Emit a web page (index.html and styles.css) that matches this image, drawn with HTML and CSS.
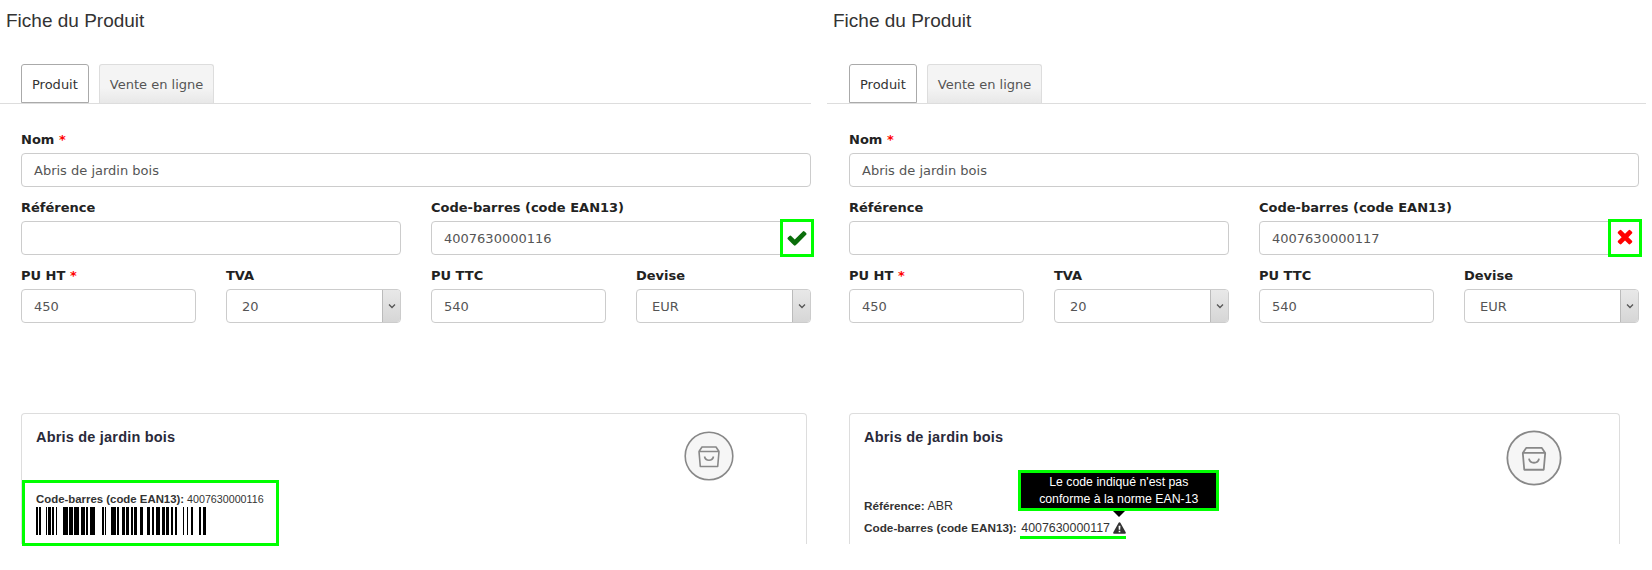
FILE: index.html
```html
<!DOCTYPE html>
<html lang="fr">
<head>
<meta charset="utf-8">
<title>Fiche du Produit</title>
<link rel="stylesheet" href="styles.css">
</head>
<body>
<div class="page">
  <section class="panel panel-left">
    <h1 class="title">Fiche du Produit</h1>
    <div class="tabs">
      <div class="tab tab-active">Produit</div>
      <div class="tab">Vente en ligne</div>
    </div>
    <div class="form">
      <div class="field">
        <div class="label">Nom <span class="req">*</span></div>
        <div class="input">Abris de jardin bois</div>
      </div>
      <div class="row">
        <div class="field">
          <div class="label">Référence</div>
          <div class="input"></div>
        </div>
        <div class="field">
          <div class="label">Code-barres (code EAN13)</div>
          <div class="input-wrap">
            <div class="input input-code">4007630000116</div>
            <div class="status">
              <svg class="ico-check" viewBox="0 0 1792 1792"><path d="M1671 566q0 40-28 68l-724 724-136 136q-28 28-68 28t-68-28l-136-136-362-362q-28-28-28-68t28-68l136-136q28-28 68-28t68 28l294 295 656-657q28-28 68-28t68 28l136 136q28 28 28 68z"/></svg>
            </div>
          </div>
        </div>
      </div>
      <div class="row">
        <div class="subrow">
          <div class="field">
            <div class="label">PU HT <span class="req">*</span></div>
            <div class="input">450</div>
          </div>
          <div class="field">
            <div class="label">TVA</div>
            <div class="select"><span class="select-val">20</span><span class="select-btn"><svg viewBox="0 0 10 10"><path d="M2 3.5 5 6.5 8 3.5" /></svg></span></div>
          </div>
        </div>
        <div class="subrow">
          <div class="field">
            <div class="label">PU TTC</div>
            <div class="input">540</div>
          </div>
          <div class="field">
            <div class="label">Devise</div>
            <div class="select"><span class="select-val">EUR</span><span class="select-btn"><svg viewBox="0 0 10 10"><path d="M2 3.5 5 6.5 8 3.5" /></svg></span></div>
          </div>
        </div>
      </div>
    </div>
    <div class="card card-left">
      <div class="card-head">
        <div class="card-title">Abris de jardin bois</div>
        <svg class="bag bag-left" viewBox="0 0 50 50"><circle cx="25" cy="25" r="23.8"/><path d="M15 20.5 16.3 35.5H33.7L35 20.5ZM15 20.5 18 16H32L35 20.5M20.5 25.5C21.5 30.5 28.5 30.5 29.5 25.5"/></svg>
      </div>
      <div class="barcode-box">
        <div class="code-line"><b>Code-barres (code EAN13):</b> 4007630000116</div>
        <svg class="barcode" viewBox="0 0 172 38" preserveAspectRatio="none"><path d="M0 0h2v38h-2zM3 0h2v38h-2zM10 0h1v38h-1zM12 0h3v38h-3zM16 0h2v38h-2zM20 0h1v38h-1zM27 0h5v38h-5zM33 0h4v38h-4zM38 0h5v38h-5zM45 0h4v38h-4zM50 0h2v38h-2zM54 0h5v38h-5zM66 0h2v38h-2zM69 0h1v38h-1zM75 0h5v38h-5zM81 0h2v38h-2zM86 0h3v38h-3zM90 0h3v38h-3zM95 0h2v38h-2zM98 0h3v38h-3zM104 0h3v38h-3zM111 0h3v38h-3zM116 0h2v38h-2zM120 0h4v38h-4zM126 0h3v38h-3zM130 0h3v38h-3zM135 0h2v38h-2zM139 0h2v38h-2zM147 0h1v38h-1zM151 0h1v38h-1zM155 0h2v38h-2zM163 0h2v38h-2zM167 0h3v38h-3z"/></svg>
      </div>
    </div>
  </section>

  <section class="panel panel-right">
    <h1 class="title">Fiche du Produit</h1>
    <div class="tabs">
      <div class="tab tab-active">Produit</div>
      <div class="tab">Vente en ligne</div>
    </div>
    <div class="form">
      <div class="field">
        <div class="label">Nom <span class="req">*</span></div>
        <div class="input">Abris de jardin bois</div>
      </div>
      <div class="row">
        <div class="field">
          <div class="label">Référence</div>
          <div class="input"></div>
        </div>
        <div class="field">
          <div class="label">Code-barres (code EAN13)</div>
          <div class="input-wrap">
            <div class="input input-code">4007630000117</div>
            <div class="status">
              <svg class="ico-times" viewBox="0 0 1408 1792"><path d="M1298 1188q0 40-28 68l-136 136q-28 28-68 28t-68-28l-294-294-294 294q-28 28-68 28t-68-28l-136-136q-28-28-28-68t28-68l294-294-294-294q-28-28-28-68t28-68l136-136q28-28 68-28t68 28l294 294 294-294q28-28 68-28t68 28l136 136q28 28 28 68t-28 68l-294 294 294 294q28 28 28 68z"/></svg>
            </div>
          </div>
        </div>
      </div>
      <div class="row">
        <div class="subrow">
          <div class="field">
            <div class="label">PU HT <span class="req">*</span></div>
            <div class="input">450</div>
          </div>
          <div class="field">
            <div class="label">TVA</div>
            <div class="select"><span class="select-val">20</span><span class="select-btn"><svg viewBox="0 0 10 10"><path d="M2 3.5 5 6.5 8 3.5" /></svg></span></div>
          </div>
        </div>
        <div class="subrow">
          <div class="field">
            <div class="label">PU TTC</div>
            <div class="input">540</div>
          </div>
          <div class="field">
            <div class="label">Devise</div>
            <div class="select"><span class="select-val">EUR</span><span class="select-btn"><svg viewBox="0 0 10 10"><path d="M2 3.5 5 6.5 8 3.5" /></svg></span></div>
          </div>
        </div>
      </div>
    </div>
    <div class="card card-right">
      <div class="card-head">
        <div class="card-title">Abris de jardin bois</div>
        <svg class="bag bag-right" viewBox="0 0 50 50"><circle cx="25" cy="25" r="23.8"/><path d="M15 20.5 16.3 35.5H33.7L35 20.5ZM15 20.5 18 16H32L35 20.5M20.5 25.5C21.5 30.5 28.5 30.5 29.5 25.5"/></svg>
      </div>
      <div class="meta">
        <div class="meta-line"><b>Référence:</b> ABR</div>
        <div class="meta-line"><b>Code-barres (code EAN13):</b> <span class="code-flag">4007630000117 <svg class="ico-warn" viewBox="0 0 14 13"><path fill-rule="evenodd" d="M7 0.3C7.5 0.3 7.9 0.6 8.1 1L13.7 11C14.1 11.8 13.6 12.7 12.7 12.7H1.3C.4 12.7-.1 11.8.3 11L5.9 1C6.1.6 6.5.3 7 .3ZM6 4 6.2 8.5H7.8L8 4ZM6.1 9.5V11.2H7.9V9.5Z"/></svg><span class="tooltip">Le code indiqué n'est pas conforme à la norme EAN-13</span></span></div>
      </div>
    </div>
  </section>
</div>
</body>
</html>
```
FILE: styles.css
```css
* { box-sizing: border-box; }
html, body { margin: 0; padding: 0; background: #fff; }
body { font-family: "DejaVu Sans", Verdana, sans-serif; color: #222; }
.page { display: flex; gap: 16px; width: 1652px; height: 570px; overflow: hidden; }
.panel { --inset: 21px; flex: none; display: flex; flex-direction: column; }
.panel-left { width: 811px; }
.panel-right { --inset: 22px; width: 819px; }
.title {
  margin: 0; padding: 10px 0 0 6px; height: 64px;
  font: 400 19px/22px "Liberation Sans", Arial, sans-serif; color: #333;
}
.tabs { display: flex; gap: 10px; height: 40px; padding-left: var(--inset); border-bottom: 1px solid #ddd; }
.tab {
  height: 39px; padding: 1px 10px 0; display: flex; align-items: center;
  font-size: 13px; color: #555;
  border: 1px solid #ddd; border-bottom-width: 0; border-radius: 3px 3px 0 0;
  background: linear-gradient(#f4f4f4 60%, #e8e8e8);
}
.tab-active { color: #333; background: #fff; border-color: #aaa; border-bottom-width: 1px; }
.form { padding-left: var(--inset); margin-top: 22px; display: flex; flex-direction: column; }
.field { display: flex; flex-direction: column; height: 68px; min-width: 0; }
.form > .field { width: 790px; }
.label { height: 27px; padding-top: 4px; font-size: 13px; font-weight: 700; line-height: 19px; color: #222; }
.req { color: #f00; }
.row { display: grid; grid-template-columns: 380px 380px; column-gap: 30px; }
.subrow { display: grid; grid-template-columns: 175px 175px; column-gap: 30px; }
.input {
  height: 34px; padding: 1px 12px 0; display: flex; align-items: center;
  font-size: 13px; color: #555; background: #fff;
  border: 1px solid #ccc; border-radius: 4px;
}
.input-wrap { position: relative; }
.input-code { padding-right: 40px; }
.status {
  position: absolute; top: -2px; right: -3px; width: 34px; height: 38px;
  display: flex; align-items: center; justify-content: center;
  background: #fff; border: 3px solid #0f0;
}
.ico-check { width: 22px; height: 22px; fill: #0a6e0a; }
.ico-times { width: 18px; height: 22px; fill: #f00; }
.select {
  height: 34px; display: flex; align-items: stretch;
  font-size: 13px; color: #555; background: #fff;
  border: 1px solid #ccc; border-radius: 4px; overflow: hidden;
}
.select-val { flex: 1; padding: 1px 0 0 15px; display: flex; align-items: center; }
.select-btn {
  flex: none; width: 18px; display: flex; align-items: center; justify-content: center;
  background: linear-gradient(#e8e8e8, #d6d6d6); border-left: 1px solid #bbb;
}
.select-btn svg { width: 10px; height: 10px; fill: none; stroke: #555; stroke-width: 1.3; }
.card {
  margin-top: 83px; margin-left: var(--inset); height: 131px;
  border: 1px solid #ddd; border-bottom: 0; border-radius: 4px 4px 0 0;
  font-family: "Liberation Sans", Arial, sans-serif;
}
.card-left { width: 786px; }
.card-right { width: 771px; }
.card-head { display: flex; justify-content: space-between; align-items: flex-start; height: 66px; padding: 15px 72px 0 14px; }
.card-right .card-head { padding-right: 57px; }
.card-title { font-size: 14.5px; font-weight: 700; line-height: 17px; color: #2a2a3a; letter-spacing: .2px; }
.bag { flex: none; fill: #f6f6f6; stroke: #888; stroke-width: 1.6; }
.bag path { fill: none; stroke-linejoin: round; }
.bag-left { width: 50px; height: 50px; margin-top: 2px; }
.bag-right { width: 56px; height: 56px; margin-top: 1px; }
.barcode-box { width: 257px; height: 66px; border: 3px solid #0f0; padding: 9px 0 0 11px; }
.code-line { font-size: 10.7px; line-height: 14px; color: #333; white-space: nowrap; }
.code-line b { font-size: 11.4px; }
.barcode { display: block; width: 172px; height: 28px; margin-top: 1px; fill: #000; }
.meta { padding: 0 0 0 14px; margin-top: 15px; font-size: 12.4px; line-height: 22px; color: #333; }
.meta b { font-size: 11.75px; }
.meta-line { white-space: nowrap; }
.code-flag { position: relative; display: inline-block; line-height: 16px; border-bottom: 3px solid #0f0; padding-left: 1px; }
.ico-warn { width: 13px; height: 12px; fill: #333; vertical-align: -2px; }
.tooltip {
  position: absolute; left: -2px; bottom: 25px; width: 201px; padding: 1px 6px 0;
  background: #000; color: #fff; border: 3px solid #0f0;
  font-size: 12.3px; line-height: 17px; text-align: center; white-space: normal;
}
.tooltip::after {
  content: ""; position: absolute; left: 50%; top: 100%; margin: 3px 0 0 -6px;
  border: 6px solid transparent; border-top-color: #000; border-bottom-width: 0;
}
```
